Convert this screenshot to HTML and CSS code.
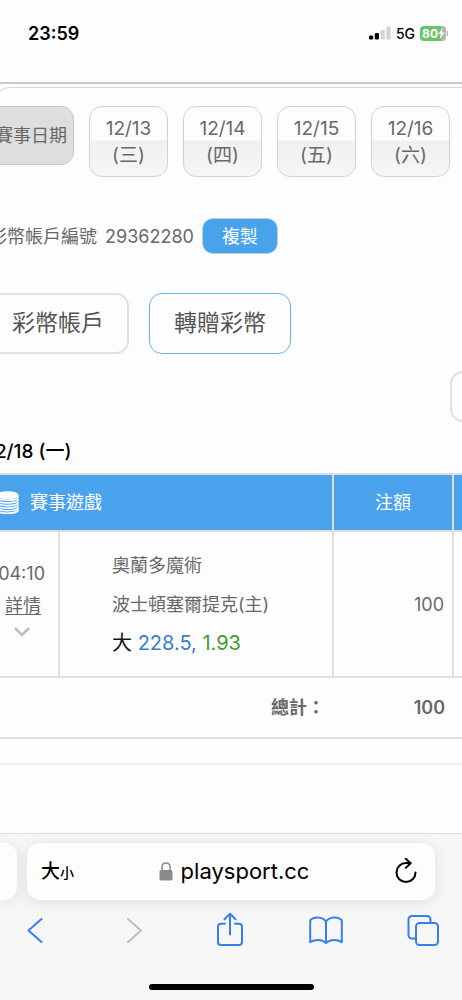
FILE: index.html
```html
<!DOCTYPE html>
<html lang="zh-Hant">
<head>
<meta charset="utf-8">
<meta name="viewport" content="width=device-width, initial-scale=1">
<title>playsport.cc</title>
<link rel="stylesheet" href="styles.css">
</head>
<body>
<header class="status">
  <time class="clock">23:59</time>
  <div class="signals">
    <svg class="bars" width="22" height="14" viewBox="0 0 22 14" aria-hidden="true">
      <rect x="0" y="9.5" width="4.2" height="4" rx="1.2" fill="#000"/>
      <rect x="5.8" y="7" width="4.2" height="6.5" rx="1.2" fill="#000"/>
      <rect x="11.6" y="4" width="4.2" height="9.5" rx="1.2" fill="#d2d2d2"/>
      <rect x="17.4" y="0.5" width="4.2" height="13" rx="1.2" fill="#d2d2d2"/>
    </svg>
    <span class="network">5G</span>
    <div class="power">
      <span class="battery">80<svg width="7" height="11" viewBox="0 0 7 11" aria-hidden="true"><path d="M4.5 0 0.4 6h2.3L1.800 11 6.600 4.600H4z" fill="#fff"/></svg></span>
      <span class="battery-tip"></span>
    </div>
  </div>
</header>

<main class="viewport">
  <div class="page">
    <div class="dates">
      <span class="dates-label">賽事日期</span>
      <button class="date">12/13<br>(三)</button>
      <button class="date">12/14<br>(四)</button>
      <button class="date">12/15<br>(五)</button>
      <button class="date">12/16<br>(六)</button>
    </div>

    <div class="account">
      <span>彩幣帳戶編號</span>
      <span>29362280</span>
      <button class="copy">複製</button>
    </div>

    <div class="actions">
      <button class="action">彩幣帳戶</button>
      <button class="action action-active">轉贈彩幣</button>
    </div>

    <div class="filter-row"><button class="filter" aria-label="篩選"></button></div>

    <h2 class="day">12/18 (一)</h2>

    <table class="bets">
      <colgroup><col class="col-time"><col><col class="col-stake"><col class="col-rest"></colgroup>
      <thead>
        <tr>
          <th colspan="2" class="game-head">
            <div class="game-title">
              <svg width="23" height="23" viewBox="0 0 23 23" aria-hidden="true">
                <ellipse cx="11.5" cy="4.2" rx="11" ry="4" fill="#fff"/>
                <g fill="none" stroke="#fff" stroke-width="1.7">
                  <path d="M.6 5.500c1 5 20.800 5 21.800 0"/><path d="M.6 8.200c1 5 20.800 5 21.800 0"/><path d="M.6 10.800c1 5 20.800 5 21.800 0"/><path d="M.6 13.400c1 5 20.800 5 21.800 0"/><path d="M.6 16c1 5 20.800 5 21.800 0"/><path d="M.6 18.500c1 5 20.800 5 21.800 0"/>
                </g>
              </svg>
              賽事遊戲
            </div>
          </th>
          <th>注額</th>
          <th></th>
        </tr>
      </thead>
      <tbody>
        <tr>
          <td class="time">
            04:10<br><a href="#detail">詳情</a>
            <svg class="chevron" width="18" height="12" viewBox="0 0 18 12" aria-hidden="true"><path d="M2 2l7 7 7-7" fill="none" stroke="#bdbdbd" stroke-width="2.600"/></svg>
          </td>
          <td class="game">
            <div>奧蘭多魔術</div>
            <div>波士頓塞爾提克(主)</div>
            <div class="pick">大 <span class="line">228.5,</span> <span class="odds">1.93</span></div>
          </td>
          <td class="amount">100</td>
          <td></td>
        </tr>
      </tbody>
      <tfoot>
        <tr>
          <td colspan="2" class="sum">總計：</td>
          <td class="amount">100</td>
          <td></td>
        </tr>
      </tfoot>
    </table>
    <hr class="rule">
  </div>
</main>

<footer class="browser">
  <div class="tabs">
    <div class="tab-prev"></div>
    <div class="address">
      <button class="text-size" aria-label="文字大小">大<small>小</small></button>
      <div class="host">
        <svg width="14" height="19" viewBox="0 0 14 19" aria-hidden="true"><rect x=".5" y="8" width="13" height="10.500" rx="1.800" fill="#8a898e"/><path d="M3 8.500V5.200C3 2.600 4.700 1 7 1s4 1.600 4 4.200v3.300" fill="none" stroke="#8a898e" stroke-width="1.500"/></svg>
        <span>playsport.cc</span>
      </div>
      <button aria-label="重新載入">
        <svg width="24" height="28" viewBox="0 0 24 28" fill="none" stroke="#000" stroke-width="2" stroke-linecap="round" stroke-linejoin="round" aria-hidden="true"><path d="M21.500 14.500A9.500 9.500 0 1 1 12 5h4.500"/><path d="M11.800.8l4.700 4.400-4.700 4.700"/></svg>
      </button>
    </div>
    <div class="tab-next"></div>
  </div>
  <nav class="tools">
    <button aria-label="上一頁"><svg width="34" height="36" viewBox="0 0 34 36"><path d="M23.500 7 10.500 18.500 23.500 30"/></svg></button>
    <button aria-label="下一頁" class="off"><svg width="34" height="36" viewBox="0 0 34 36"><path d="M13 7 26 18.500 13 30"/></svg></button>
    <button aria-label="分享"><svg width="34" height="36" viewBox="0 0 34 36"><path d="M13 11.800H9a3 3 0 0 0-3 3V30a3 3 0 0 0 3 3h18a3 3 0 0 0 3-3V14.800a3 3 0 0 0-3-3h-4M18 22.500V2M12.500 7.200 18 1.800l5.500 5.400"/></svg></button>
    <button aria-label="書籤"><svg width="34" height="36" viewBox="0 0 34 36"><path d="M17 9.500C13 4.500 5 4.500 1.200 8.200v22C6 27 13 27 17 31c4-4 11-4 15.800-.8v-22C29 4.500 21 4.500 17 9.500zV31"/></svg></button>
    <button aria-label="分頁"><svg width="34" height="36" viewBox="0 0 34 36"><path d="M10 26.500H6a3.500 3.500 0 0 1-3.500-3.500V7.500A3.500 3.500 0 0 1 6 4h15a3.500 3.500 0 0 1 3.500 3.500v3.500"/><rect x="10" y="11" width="22" height="22" rx="3.500"/></svg></button>
  </nav>
  <div class="home-bar"></div>
</footer>
</body>
</html>
```

FILE: styles.css
```css
* {
  box-sizing: border-box;
}

body {
  margin: 0;
  min-height: 100vh;
  display: flex;
  flex-direction: column;
  overflow-x: hidden;
  background: #fdfdfd;
  color: #686868;
  font: 18px/27px Inter, "Noto Sans CJK TC", sans-serif;
}

button {
  padding: 0;
  border: 0;
  background: none;
  color: inherit;
  font: inherit;
  cursor: pointer;
}

svg {
  display: block;
}

/* Status bar */
.status {
  display: flex;
  align-items: center;
  justify-content: space-between;
  height: 84px;
  padding: 0 14px 16px 28px;
  border-bottom: 2px solid #cacaca;
  color: #000;
}

.clock {
  font-weight: 600;
}

.signals {
  display: flex;
  align-items: center;
  gap: 5px;
}

.network {
  font-size: 14px;
  font-weight: 500;
}

.power {
  display: flex;
  align-items: center;
  gap: 1px;
}

.battery {
  display: flex;
  align-items: center;
  height: 15px;
  padding: 0 1px 0 2px;
  border-radius: 4px;
  background: linear-gradient(90deg, #65c766 80%, #b4b4b4 80%);
  color: #fff;
  font-size: 12px;
  font-weight: 700;
}

.battery-tip {
  width: 1px;
  height: 5px;
  background: #b4b4b4;
}

/* Web page, scrolled slightly to the right */
.viewport {
  flex: 1;
  overflow: hidden;
  margin: 3px 0 0 -4px;
  border: solid #d9d9d9;
  border-width: 1px 0 0 1px;
  border-top-left-radius: 14px;
}

.page {
  width: calc(100% + 97px);
  margin-left: -37px;
  padding-top: 18px;
}

.dates {
  display: flex;
  align-items: flex-start;
  gap: 15px;
  padding-left: 10px;
}

.dates-label,
.date {
  border: 1px solid #d2d2d2;
  border-radius: 13px;
}

.dates-label {
  width: 104px;
  height: 59px;
  padding-right: 6px;
  border-color: #c6c6c6;
  background: #dedede;
  line-height: 57px;
  text-align: right;
}

.date {
  width: 79px;
  height: 71px;
  background: linear-gradient(#fdfdfd 48%, #f0f0f0 49%, #f6f6f6);
  font-size: 19px;
}

.account {
  display: flex;
  align-items: center;
  gap: 8px;
  margin-top: 41px;
  padding-left: 29px;
}

.copy {
  width: 76px;
  height: 36px;
  border: 1px solid #b5cfe4;
  border-radius: 11px;
  background: #49a3ec;
  color: #fff;
}

.actions {
  display: flex;
  gap: 20px;
  margin-top: 39px;
  padding-left: 27px;
}

.action {
  width: 142px;
  height: 61px;
  border: 2px solid #e1e1e1;
  border-radius: 13px;
  color: #555;
  font-size: 23px;
}

.action-active {
  border: 1px solid #68b5ee;
}

.filter-row {
  display: flex;
  justify-content: flex-end;
  margin-top: 17px;
}

.filter {
  width: 72px;
  height: 51px;
  border: 2px solid #e1e1e1;
  border-radius: 13px;
}

.day {
  margin: 16px 0 8px;
  padding-left: 27px;
  color: #000;
  font-size: 19px;
  font-weight: 500;
}

/* Bets table */
.bets {
  width: 100%;
  table-layout: fixed;
  border-collapse: collapse;
}

.col-time {
  width: 98px;
}

.col-stake {
  width: 120px;
}

.col-rest {
  width: 68px;
}

.bets th,
.bets td {
  padding: 0;
  border: 2px solid #dedede;
}

.bets th {
  height: 57px;
  background: #49a3ec;
  color: #fff;
  font-weight: 400;
}

.game-title {
  display: flex;
  align-items: center;
  gap: 11px;
  padding-left: 34px;
}

.bets tbody td {
  height: 146px;
}

.bets .time {
  padding: 0 13px 12px 0;
  line-height: 32px;
  text-align: right;
}

.time a {
  color: inherit;
  margin-right: 4px;
  text-underline-offset: 2px;
}

.chevron {
  margin: 4px 14px 0 auto;
}

.bets .game {
  padding-left: 52px;
  line-height: 39px;
}

.pick {
  color: #111;
  font-size: 20px;
}

.line {
  color: #3c7dca;
}

.odds {
  color: #3f9c2a;
}

.bets .amount,
.bets .sum {
  padding-right: 8px;
  text-align: right;
}

.bets tfoot td {
  height: 61px;
  border-width: 2px 0;
  font-weight: 600;
}

.rule {
  height: 2px;
  margin: 24px 0 0;
  border: 0;
  background: #efefef;
}

/* Browser chrome */
.browser {
  overflow: hidden;
  padding: 9px 0 10px;
  border-top: 1px solid #dcdcde;
  background: #f6f6f6;
}

.tabs {
  display: flex;
  gap: 10px;
}

.tab-prev,
.address,
.tab-next {
  height: 57px;
  border-radius: 13px;
  background: #fdfdfd;
  box-shadow: 0 2px 14px rgba(0, 0, 0, 0.1);
}

.tab-prev {
  width: 17px;
  border-radius: 0 13px 13px 0;
}

.tab-next {
  width: 17px;
  visibility: hidden;
}

.address {
  flex: 1;
  display: flex;
  align-items: center;
  justify-content: space-between;
  padding: 0 17px 0 14px;
  color: #000;
}

.text-size {
  font-size: 19px;
  font-weight: 500;
}

.text-size small {
  font-size: 14px;
}

.host {
  display: flex;
  align-items: center;
  gap: 8px;
  font-size: 22px;
}

.tools {
  display: flex;
  justify-content: space-between;
  padding: 12px 22px 0 18px;
}

.tools svg {
  fill: none;
  stroke: #387df2;
  stroke-width: 2;
  stroke-linecap: round;
  stroke-linejoin: round;
}

.tools .off svg {
  stroke: #bdbdbf;
}

.home-bar {
  width: 165px;
  height: 6px;
  margin: 36px auto 0;
  border-radius: 3px;
  background: #000;
}
```
